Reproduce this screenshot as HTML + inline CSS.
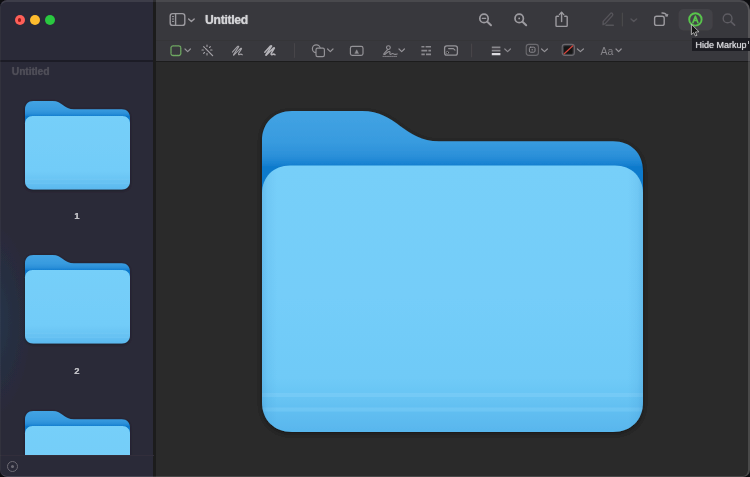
<!DOCTYPE html>
<html><head><meta charset="utf-8">
<style>
*{margin:0;padding:0;box-sizing:border-box}
html,body{width:750px;height:477px;overflow:hidden;background:#0d0d10;font-family:"Liberation Sans",sans-serif}
#win{position:absolute;left:0;top:0;width:750px;height:477px;border-radius:7px 10px 7px 7px;overflow:hidden;background:#27272d;filter:url(#bl)}
#frame{position:absolute;left:0;top:0;width:750px;height:477px;border-radius:7px 10px 7px 7px;border:1px solid rgba(255,255,255,0.15);border-top:2px solid rgba(255,255,255,0.09);border-left-color:rgba(255,255,255,0.04);border-right-width:2px;border-bottom-width:1.5px}
#sidebar{position:absolute;left:0;top:0;width:154px;height:477px;background:#2a2937}
#glow{position:absolute;left:-45px;top:215px;width:80px;height:210px;border-radius:50%;background:radial-gradient(closest-side,rgba(30,68,105,0.38),rgba(30,68,105,0))}
#sbline{position:absolute;left:0;top:60px;width:154px;height:2px;background:#1f1f27}
#divider{position:absolute;left:153px;top:0;width:2.5px;height:477px;background:#1b1b1f}
#toolbar{position:absolute;left:155px;top:0;width:595px;height:61px;background:#39383d}
#canvas{position:absolute;left:155px;top:61px;width:595px;height:416px;background:#292929}
#tbline{position:absolute;left:155px;top:60.5px;width:595px;height:1.5px;background:#1d1d1f}
#tbmid{position:absolute;left:155px;top:39.5px;width:595px;height:1px;background:rgba(0,0,0,0.07)}
.tl{position:absolute;top:14.8px;width:10px;height:10px;border-radius:50%}
.title{position:absolute;left:205px;top:12.5px;font-size:12.2px;font-weight:bold;color:#d4d4d7;letter-spacing:-0.3px}
.sbtitle{position:absolute;left:11.8px;top:66.4px;font-size:10.3px;font-weight:bold;color:#4f4e58;letter-spacing:-0.1px}
.num{position:absolute;font-size:9.6px;font-weight:bold;color:#bfbfc4;width:20px;text-align:center}
svg{position:absolute;overflow:visible}
#tip{position:absolute;left:692px;top:38px;width:60px;height:13px;background:#1e1e23}
#txt{position:absolute;left:0;top:0;width:750px;height:477px;will-change:transform}
#txt div{text-shadow:0 0 1px currentColor}
#txt .num{text-shadow:0 0 0.6px currentColor}
.tiptxt{position:absolute;left:695.5px;top:39.5px;font-size:9px;color:#d6d6da;white-space:nowrap}
</style></head><body>
<svg width="0" height="0" style="position:absolute"><filter id="bl" x="0" y="0" width="100%" height="100%"><feGaussianBlur stdDeviation="0.7"/></filter></svg>
<div id="win">
  <div id="sidebar"></div>
  <div id="glow"></div>
  <div id="sbline"></div>
  <div id="toolbar"></div>
  <div id="canvas"></div>
  <div id="tbmid"></div>
  <div id="tbline"></div>
  <div id="divider"></div>

  <div class="tl" style="left:14.6px;background:#fe5f58"></div>
  <div style="position:absolute;left:17.8px;top:18px;width:3.6px;height:3.6px;border-radius:50%;background:#9a1b17"></div>
  <div class="tl" style="left:29.7px;background:#febc2e"></div>
  <div class="tl" style="left:44.8px;background:#29c840"></div>


<svg width="0" height="0" style="position:absolute">
 <defs>
  <linearGradient id="gb" x1="0" y1="0" x2="0" y2="56" gradientUnits="userSpaceOnUse">
   <stop offset="0" stop-color="#42a3e3"/>
   <stop offset="0.55" stop-color="#389bdf"/>
   <stop offset="0.8" stop-color="#2b90d9"/>
   <stop offset="0.93" stop-color="#1b84d3"/>
   <stop offset="1" stop-color="#0e7acc"/>
  </linearGradient>
  <linearGradient id="gf" x1="0" y1="54.5" x2="0" y2="321" gradientUnits="userSpaceOnUse">
   <stop offset="0" stop-color="#77cff9"/>
   <stop offset="0.5" stop-color="#74cdf9"/>
   <stop offset="0.8" stop-color="#6fcaf7"/>
   <stop offset="0.86" stop-color="#69c5f4"/>
   <stop offset="1" stop-color="#58b6ed"/>
  </linearGradient>
  <filter id="shs" x="-10%" y="-10%" width="120%" height="120%"><feDropShadow dx="0" dy="3" stdDeviation="6" flood-color="#000" flood-opacity="0.35"/></filter>
  <filter id="sh" x="-10%" y="-10%" width="120%" height="120%"><feDropShadow dx="0" dy="1.5" stdDeviation="2.5" flood-color="#000" flood-opacity="0.45"/></filter>
  <clipPath id="fc"><path d="M0,82.5 C0,66.0 11.5,54.5 28,54.5 L353,54.5 C369.5,54.5 381,66.0 381,82.5 L381,291 C381,309 369,321 351,321 L30,321 C12,321 0,309 0,291 Z"/></clipPath>
  <linearGradient id="ge" x1="0" y1="0" x2="381" y2="0" gradientUnits="userSpaceOnUse">
   <stop offset="0" stop-color="#0a5aa8" stop-opacity="0.16"/>
   <stop offset="0.015" stop-color="#0a5aa8" stop-opacity="0.06"/>
   <stop offset="0.04" stop-color="#0a5aa8" stop-opacity="0"/>
   <stop offset="0.96" stop-color="#0a5aa8" stop-opacity="0"/>
   <stop offset="0.985" stop-color="#0a5aa8" stop-opacity="0.06"/>
   <stop offset="1" stop-color="#0a5aa8" stop-opacity="0.16"/>
  </linearGradient>
  <g id="folder">
   <path fill="url(#gb)" d="M0,30 C0,12 12,0 30,0 L100,0 C135,0 142,30.3 177,30.3 L351,30.3 C369,30.3 381,42.3 381,60.3 L381,90 L0,90 Z"/>
   <path fill="url(#gf)" d="M0,82.5 C0,66.0 11.5,54.5 28,54.5 L353,54.5 C369.5,54.5 381,66.0 381,82.5 L381,291 C381,309 369,321 351,321 L30,321 C12,321 0,309 0,291 Z"/>
   <g clip-path="url(#fc)"><rect x="0" y="282" width="381" height="4" fill="#8fd6fb" opacity="0.32"/>
   <rect x="0" y="296.5" width="381" height="4" fill="#8fd6fb" opacity="0.28"/></g>
   <rect x="0" y="54.5" width="381" height="267" fill="url(#ge)" clip-path="url(#fc)"/>
  </g>
  <linearGradient id="gfs" x1="0" y1="54.5" x2="0" y2="321" gradientUnits="userSpaceOnUse">
   <stop offset="0" stop-color="#76cff9"/>
   <stop offset="0.75" stop-color="#72ccf8"/>
   <stop offset="0.88" stop-color="#68c3f3"/>
   <stop offset="1" stop-color="#5ab8ee"/>
  </linearGradient>
  <g id="folders">
   <path fill="url(#gb)" d="M0,30 C0,12 12,0 30,0 L100,0 C135,0 142,30.3 177,30.3 L351,30.3 C369,30.3 381,42.3 381,60.3 L381,90 L0,90 Z"/>
   <path fill="url(#gfs)" d="M0,82.5 C0,66.0 11.5,54.5 28,54.5 L353,54.5 C369.5,54.5 381,66.0 381,82.5 L381,291 C381,309 369,321 351,321 L30,321 C12,321 0,309 0,291 Z"/>
   <g clip-path="url(#fc)"><rect x="0" y="282" width="381" height="4" fill="#8fd6fb" opacity="0.2"/>
   <rect x="0" y="296.5" width="381" height="4" fill="#8fd6fb" opacity="0.2"/></g>
  </g>
 </defs>
</svg>
<svg style="left:262px;top:110.7px" width="381" height="321"><use href="#folder" filter="url(#sh)"/></svg>
<svg style="left:24.9px;top:100.5px" width="105" height="89"><g transform="scale(0.2756)" filter="url(#shs)"><use href="#folders"/></g></svg>
<svg style="left:24.9px;top:255.3px" width="105" height="89"><g transform="scale(0.2756)" filter="url(#shs)"><use href="#folders"/></g></svg>
<div style="position:absolute;left:0;top:0;width:154px;height:455.5px;overflow:hidden">
<svg style="left:24.9px;top:410.7px" width="105" height="89"><g transform="scale(0.2756)" filter="url(#shs)"><use href="#folders"/></g></svg>
</div>
  <div style="position:absolute;left:0;top:455px;width:154px;height:1px;background:#302f3a"></div>
  <div style="position:absolute;left:7px;top:460.5px;width:11px;height:11px;border-radius:50%;border:1px solid #6c6b74"></div>
  <div style="position:absolute;left:11px;top:464.5px;width:3px;height:3px;border-radius:50%;background:#6c6b74"></div>



<svg id="icons" style="left:0;top:0" width="750" height="477" fill="none" stroke-linecap="round" stroke-linejoin="round">
 <!-- row1 -->
 <g stroke="#9c9ba0" stroke-width="1.4">
  <rect x="170.2" y="13.6" width="14.6" height="11.8" rx="2.5"/>
  <line x1="175.6" y1="13.8" x2="175.6" y2="25.2"/>
  <line x1="172.4" y1="16.6" x2="173.6" y2="16.6" stroke-width="1"/>
  <line x1="172.4" y1="19" x2="173.6" y2="19" stroke-width="1"/>
  <line x1="172.4" y1="21.4" x2="173.6" y2="21.4" stroke-width="1"/>
  <path d="M188.6,19 L191.4,21.6 L194.2,19"/>
  <!-- zoom out -->
  <circle cx="484" cy="18.4" r="4.2" stroke-width="1.7"/>
  <line x1="487.3" y1="21.7" x2="491" y2="25.2" stroke-width="2"/>
  <line x1="482.3" y1="18.4" x2="485.7" y2="18.4" stroke-width="1.2"/>
  <!-- zoom in -->
  <circle cx="519.2" cy="18.4" r="4.2" stroke-width="1.7"/>
  <line x1="522.5" y1="21.7" x2="526.2" y2="25.2" stroke-width="2"/>
  <circle cx="519.2" cy="18.4" r="0.9" fill="#a3a2a7" stroke="none"/>
  <!-- share -->
  <path d="M558.5,16.2 L556.8,16.2 Q556,16.2 556,17 L556,25.6 Q556,26.4 556.8,26.4 L566.4,26.4 Q567.2,26.4 567.2,25.6 L567.2,17 Q567.2,16.2 566.4,16.2 L564.7,16.2"/>
  <line x1="561.6" y1="12.4" x2="561.6" y2="21.6"/>
  <path d="M559.4,14.6 L561.6,12.2 L563.8,14.6"/>
  <!-- rotate -->
  <rect x="654.6" y="16.2" width="9.6" height="9.2" rx="2"/>
  <path d="M662,13 Q665.6,12.8 667,15.6" stroke-width="1.3"/>
  <path d="M665.4,15.8 L667.2,16.2 L667.8,14.4" stroke-width="1.1"/>
  <!-- search -->
  <circle cx="727.6" cy="18.4" r="4.4" stroke="#5d5c62"/>
  <line x1="730.9" y1="21.7" x2="734.6" y2="25.2" stroke="#5d5c62" stroke-width="1.7"/>
 </g>
 <!-- pen dim -->
 <g stroke="#55545a" stroke-width="1.4">
  <path d="M603,24.6 L603.2,21.4 L610.4,13.6 Q611.4,12.6 612.4,13.6 Q613.3,14.6 612.4,15.6 L605.2,23.6 Z"/>
  <line x1="606" y1="25.2" x2="613.4" y2="25.2"/>
  <line x1="622.4" y1="13" x2="622.4" y2="26" stroke="#4a4a4f" stroke-width="1"/>
  <path d="M631,19 L633.8,21.4 L636.6,19"/>
 </g>
 <!-- markup button -->
 <rect x="678.6" y="9" width="34" height="21.4" rx="5" fill="#434247"/>
 <circle cx="695.4" cy="19.4" r="6.2" stroke="#58c44c" stroke-width="1.9"/>
 <path d="M692.9,22.6 L695.4,16.2 L697.9,22.6 M693.8,20.4 L697,20.4" stroke="#58c44c" stroke-width="1.6"/>
 <!-- row2 -->
 <g stroke="#939297" stroke-width="1.2">
  <rect x="171" y="45.9" width="9.8" height="9.6" rx="2" stroke="#6ea862" stroke-width="1.3" stroke-dasharray="1.4 0.8"/>
  <path d="M185,49 L187.7,51.6 L190.4,49" stroke-width="1.2"/>
  <!-- instant alpha -->
  <g stroke-width="1.1" stroke="#a09fa4">
   <line x1="207" y1="45" x2="207" y2="46.4"/>
   <line x1="207" y1="53.6" x2="207" y2="55"/>
   <line x1="202" y1="50" x2="203.4" y2="50"/>
   <line x1="210.6" y1="50" x2="212" y2="50"/>
   <line x1="203.6" y1="46.6" x2="204.5" y2="47.5"/>
   <line x1="210.4" y1="46.6" x2="209.5" y2="47.5"/>
   <line x1="203.6" y1="53.4" x2="204.5" y2="52.5"/>
   <line x1="205.4" y1="48.4" x2="212.6" y2="55.6" stroke-width="1.3"/>
  </g>
  <!-- sketch -->
  <path d="M232.4,52.2 L237.6,46.4 Q238.4,45.8 238.8,46.6 L233.6,54.6 Q233.2,55.4 234,55 L240.6,48.4 Q241.4,47.8 241.6,48.6 L238.6,53.4 Q238.2,55.2 239.6,54.6 Q241,53.6 242.4,54.8" stroke-width="1.05" stroke="#a3a2a7"/>
  <!-- draw -->
  <path d="M264.8,52.2 L270.4,46 Q271.2,45.4 271.6,46.2 L266,54.6 Q265.6,55.4 266.4,55 L273.4,48 Q274.2,47.4 274.4,48.2 L271.2,53.4 Q270.8,55.2 272.2,54.6 Q273.6,53.6 275,54.8" stroke-width="1.5" stroke="#b4b3b8"/>
  <line x1="294.4" y1="43.6" x2="294.4" y2="57.4" stroke="#48474c" stroke-width="1"/>
  <!-- shapes -->
  <circle cx="316.3" cy="48.8" r="3.9"/>
  <rect x="316" y="48.2" width="8.4" height="8.4" rx="1.6" fill="#39383d"/>
  <path d="M327.6,49 L330.3,51.6 L333,49"/>
  <!-- text box -->
  <rect x="350.4" y="46.4" width="12.6" height="9" rx="1.8"/>
  <path d="M355,53.2 L356.7,49.8 L358.4,53.2 Z" fill="#939297" stroke-width="0.5"/>
  <!-- signature -->
  <circle cx="388.4" cy="47.6" r="1.9" stroke-width="1.1"/>
  <path d="M387.6,49.6 L384,53.6 Q383.2,55 385,54.4 Q387.4,52.2 389,51.6 Q390.6,51.4 389.8,53.4 Q389.6,55 391.4,54 Q392.8,53 393.6,53.8 Q394.8,54.8 397.2,54" stroke-width="1.1"/>
  <line x1="383" y1="56.4" x2="397.4" y2="56.4" stroke-width="0.8" stroke-dasharray="1 0.8"/>
  <path d="M399,49 L401.7,51.6 L404.4,49"/>
  <!-- adjust color -->
  <g stroke-width="1.6" stroke="#8a898e" stroke-linecap="butt">
   <line x1="421.4" y1="46.8" x2="424.4" y2="46.8"/><line x1="425.6" y1="46.8" x2="431" y2="46.8"/>
   <line x1="421.4" y1="50.6" x2="427.2" y2="50.6"/><line x1="428.4" y1="50.6" x2="431" y2="50.6"/>
   <line x1="421.4" y1="54.4" x2="424.8" y2="54.4"/><line x1="426" y1="54.4" x2="431" y2="54.4"/>
  </g>
  <!-- adjust size -->
  <rect x="444.6" y="45.8" width="12.8" height="9.4" rx="2.2" stroke-width="1.3"/>
  <circle cx="447.4" cy="52.6" r="1.2" fill="#111" stroke="#9a999e" stroke-width="0.7"/>
  <path d="M448.6,48.6 L453.4,48.6 L455,50.2" stroke-width="1.1"/>
  <line x1="471.6" y1="44" x2="471.6" y2="56.8" stroke="#48474c" stroke-width="1"/>
  <!-- shape style -->
  <line x1="491.8" y1="47.4" x2="500.4" y2="47.4" stroke="#8a898e" stroke-width="1.8" stroke-linecap="butt"/>
  <line x1="491.8" y1="50.7" x2="500.4" y2="50.7" stroke="#8a898e" stroke-width="1.8" stroke-linecap="butt"/>
  <line x1="491.8" y1="54.2" x2="500.4" y2="54.2" stroke="#dcdbe0" stroke-width="2.3" stroke-linecap="butt"/>
  <path d="M504.8,49 L507.6,51.6 L510.4,49" stroke="#8a898e"/>
  <!-- border color -->
  <rect x="526.2" y="44.4" width="12.2" height="11" rx="2.6" stroke="#6a696e" stroke-width="1.1"/>
  <rect x="529.4" y="47.2" width="5.6" height="5" rx="1.2" stroke="#8d8c91" stroke-width="1"/>
  <circle cx="532.2" cy="49.7" r="0.7" fill="#8d8c91" stroke="none"/>
  <path d="M541.6,49 L544.5,51.6 L547.4,49"/>
  <!-- fill color -->
  <rect x="562.2" y="44.4" width="12.2" height="11" rx="2.6" stroke="#6a696e" stroke-width="1.1"/>
  <rect x="564" y="46.2" width="8.6" height="7.6" rx="1" fill="#131315" stroke="none"/>
  <line x1="564.2" y1="53.8" x2="572.6" y2="46" stroke="#d2443c" stroke-width="1.3"/>
  <path d="M577.4,49 L580.4,51.6 L583.4,49"/>
  <path d="M616,49 L618.6,51.6 L621.2,49"/>
 </g>
 <text x="600.6" y="54.8" font-family="Liberation Sans" font-size="10.5" fill="#858489">Aa</text>
 <!-- cursor -->
 <path d="M691.4,24.6 L691.4,34.6 L693.8,32.6 L695.4,36 L697,35.3 L695.4,32 L698.6,31.8 Z" fill="#151515" stroke="#c8c8c8" stroke-width="0.8"/>
</svg>
  <div id="frame"></div>
  <div id="tip"></div>
</div>
<div id="txt">
  <div class="sbtitle">Untitled</div>
  <div class="title">Untitled</div>
  <div class="num" style="left:67px;top:210px">1</div>
  <div class="num" style="left:67px;top:365px">2</div>
  <div class="tiptxt">Hide Markup</div>
  <div style="position:absolute;left:748px;top:41px;width:1px;height:2.5px;background:#b8b8bc"></div>
</div>
</body></html>
